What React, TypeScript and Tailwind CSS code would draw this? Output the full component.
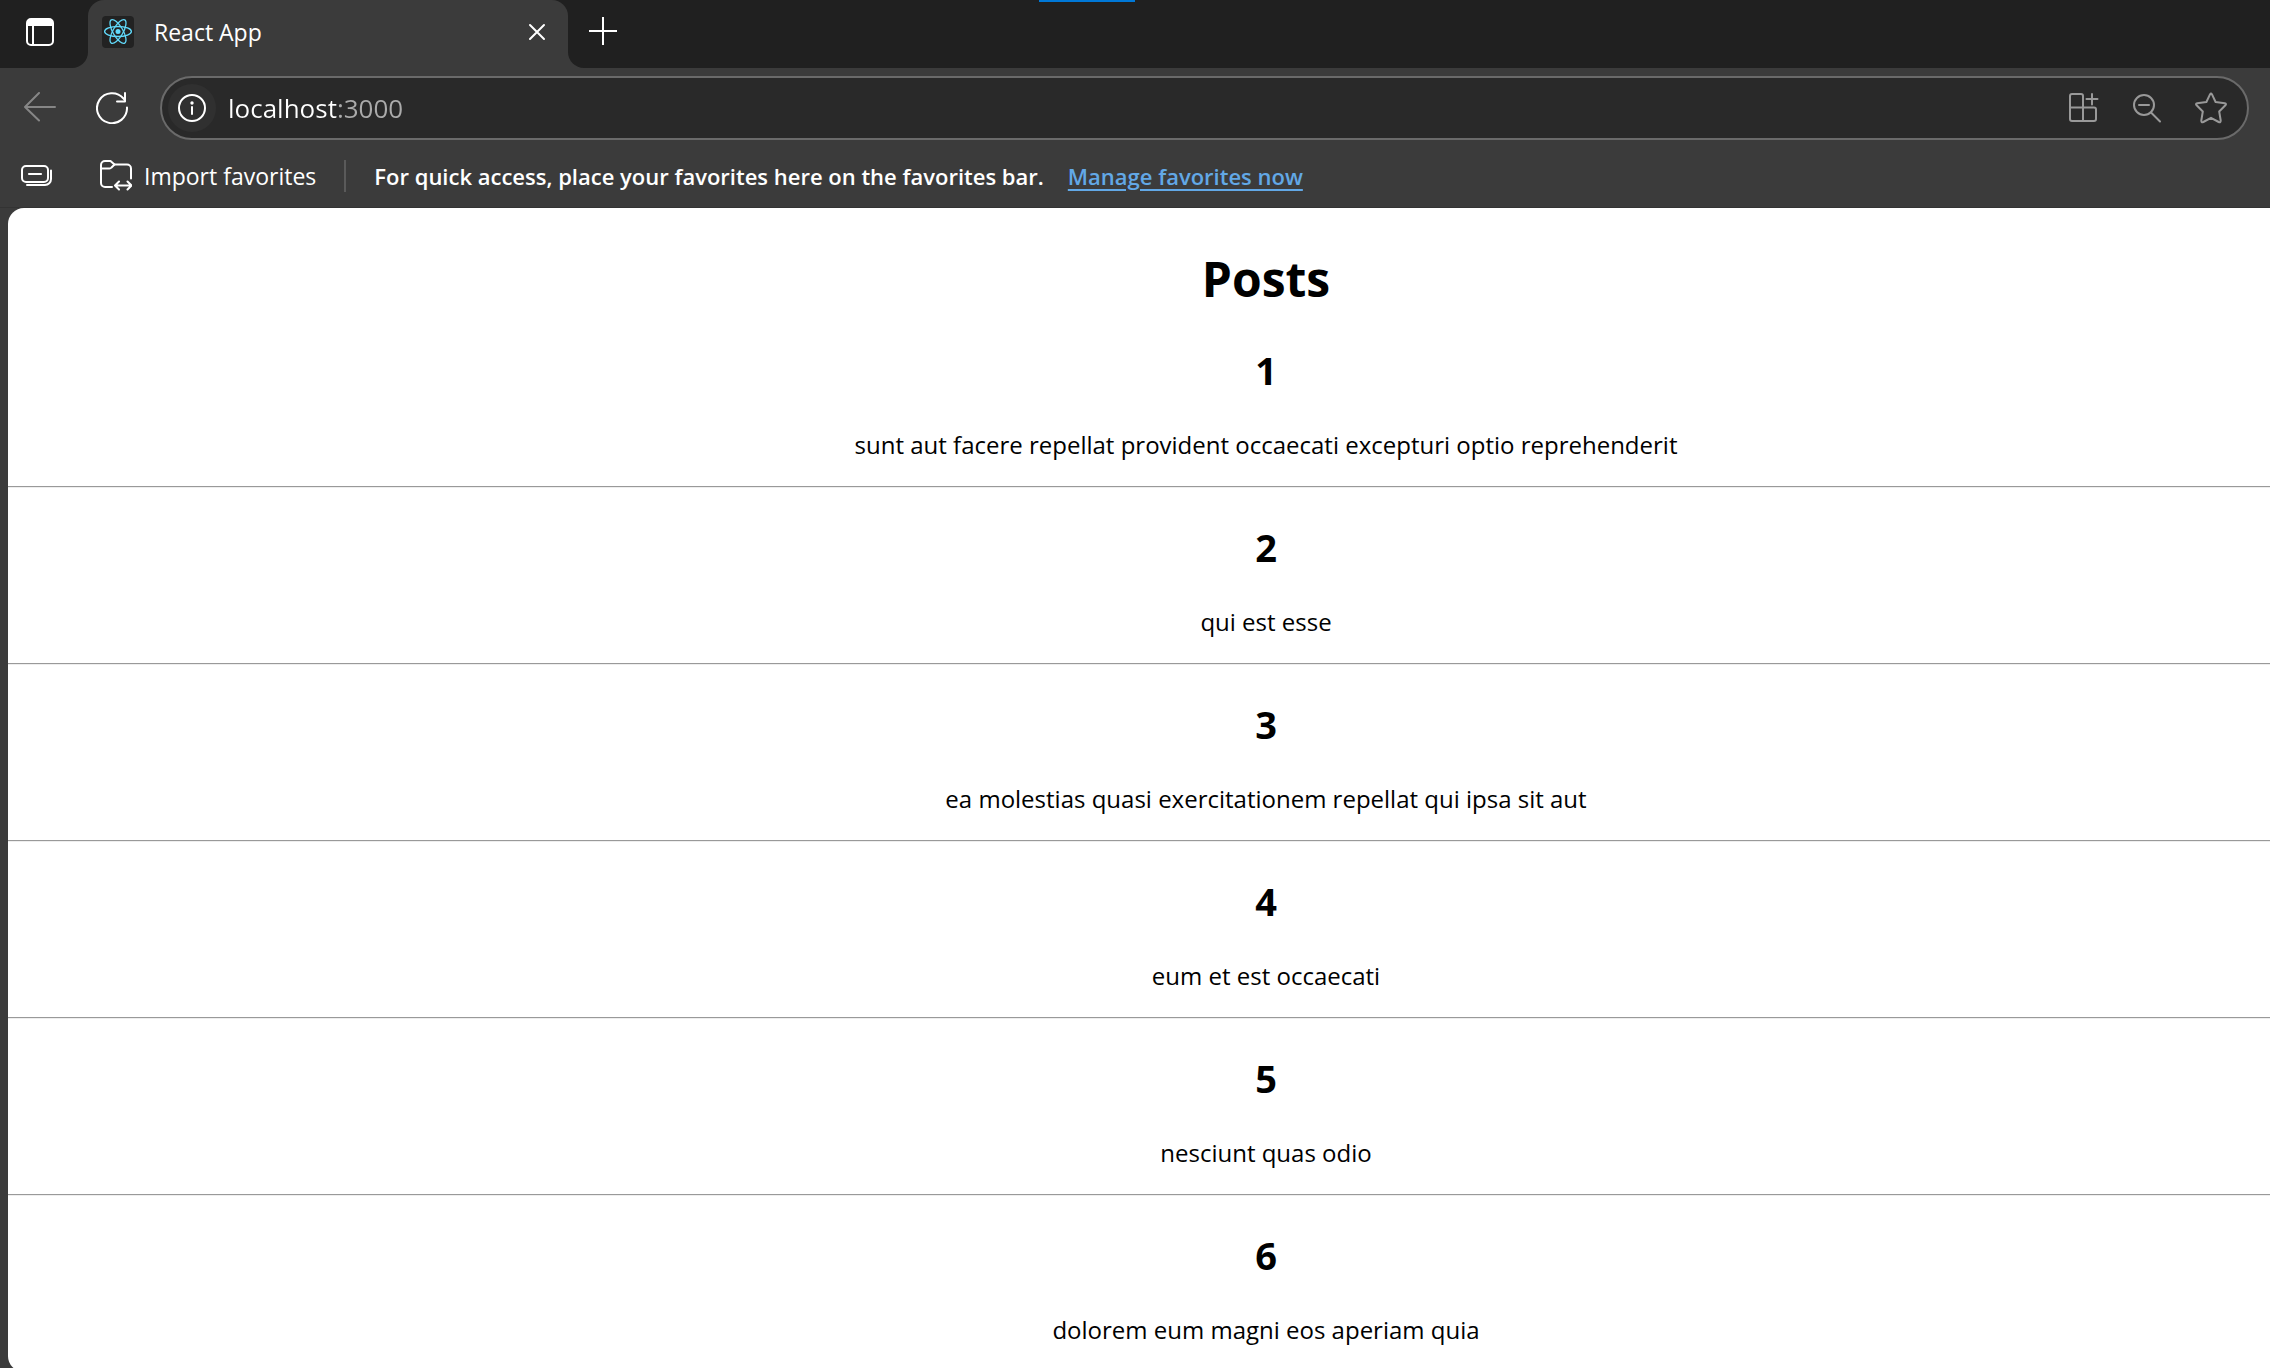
import React from "react";

const posts = [
  { id: 1, title: "sunt aut facere repellat provident occaecati excepturi optio reprehenderit" },
  { id: 2, title: "qui est esse" },
  { id: 3, title: "ea molestias quasi exercitationem repellat qui ipsa sit aut" },
  { id: 4, title: "eum et est occaecati" },
  { id: 5, title: "nesciunt quas odio" },
  { id: 6, title: "dolorem eum magni eos aperiam quia" },
];

function TabActionsIcon() {
  return (
    <svg width="28" height="28" viewBox="0 0 28 28" fill="none" stroke="white" strokeWidth="2">
      <rect x="1" y="1" width="26" height="26" rx="4" />
      <path d="M1 8V5a4 4 0 0 1 4-4h18a4 4 0 0 1 4 4v3z" fill="white" stroke="none" />
      <path d="M7 7v20" />
    </svg>
  );
}

function ReactIcon() {
  return (
    <svg width="32" height="32" viewBox="0 0 32 32" fill="none" stroke="#61dafb" strokeWidth="1.3">
      <rect width="32" height="32" rx="4" fill="#222222" stroke="none" />
      <ellipse cx="16" cy="15.5" rx="13.4" ry="5" />
      <ellipse cx="16" cy="15.5" rx="13.4" ry="5" transform="rotate(60 16 15.5)" />
      <ellipse cx="16" cy="15.5" rx="13.4" ry="5" transform="rotate(120 16 15.5)" />
      <circle cx="16" cy="15.5" r="2.5" fill="#61dafb" stroke="none" />
    </svg>
  );
}

function CloseIcon() {
  return (
    <svg width="18" height="18" viewBox="0 0 18 18" stroke="white" strokeWidth="2" strokeLinecap="round">
      <path d="M2 2l14 14M16 2L2 16" />
    </svg>
  );
}

function PlusIcon() {
  return (
    <svg width="28" height="28" viewBox="0 0 28 28" stroke="white" strokeWidth="2">
      <path d="M14 0v28M0 14h28" />
    </svg>
  );
}

function BackIcon() {
  return (
    <svg width="32" height="32" viewBox="0 0 32 32" fill="none" stroke="#868686" strokeWidth="2" strokeLinecap="round" strokeLinejoin="round">
      <path d="M15 1L1 15l14 13.500M1 15h30" />
    </svg>
  );
}

function RefreshIcon() {
  return (
    <svg width="32" height="32" viewBox="0 0 32 32" fill="none" stroke="white" strokeWidth="2" strokeLinecap="round" strokeLinejoin="round">
      <path d="M31 15.500A15 15 0 1 1 27.500 6.500L29 8.500" />
      <path d="M29 1v8.500h-8" />
    </svg>
  );
}

function InfoIcon() {
  return (
    <svg width="28" height="28" viewBox="0 0 28 28" fill="none" stroke="white" strokeWidth="2">
      <circle cx="14" cy="14" r="13" />
      <path d="M14 13v7" strokeLinecap="round" />
      <circle cx="14" cy="9" r="1.700" fill="white" stroke="none" />
    </svg>
  );
}

function AppsIcon() {
  return (
    <svg width="30" height="30" viewBox="0 0 30 30" fill="none" stroke="#999999" strokeWidth="2" strokeLinejoin="round">
      <path d="M14 28V3a2 2 0 0 0-2-2H3a2 2 0 0 0-2 2v23a2 2 0 0 0 2 2h22a2 2 0 0 0 2-2V16.500a2 2 0 0 0-2-2H1" />
      <path d="M23 1v10.500M17.500 6h11" strokeLinecap="round" />
    </svg>
  );
}

function ZoomOutIcon() {
  return (
    <svg width="30" height="30" viewBox="0 0 30 30" fill="none" stroke="#999999" strokeWidth="2" strokeLinecap="round">
      <circle cx="12" cy="12" r="10" />
      <path d="M7 12h10M19 19.500l9 9" />
    </svg>
  );
}

function StarIcon() {
  return (
    <svg width="32" height="32" viewBox="0 0 32 32" fill="none" stroke="#999999" strokeWidth="2" strokeLinejoin="round">
      <path d="M15 2.400Q16 .6 17 2.400L20.600 10L29.800 11.200Q31.800 11.700 30.400 13.300L24.200 19.500L25.700 28.500Q25.700 31 23.700 30L16 25.800L8.300 30Q6.300 31 6.300 28.500L7.800 19.500L1.600 13.300Q.2 11.700 2.200 11.200L11.400 10Z" />
    </svg>
  );
}

function WorkspaceIcon() {
  return (
    <svg width="32" height="22" viewBox="0 0 32 22" fill="none" stroke="white" strokeWidth="2" strokeLinecap="round">
      <rect x="2" y="1" width="26" height="16" rx="4" />
      <path d="M9 9h12" strokeWidth="2.200" />
      <path d="M31 5.500V14a6 6 0 0 1-6 6H7" />
    </svg>
  );
}

function ImportIcon() {
  return (
    <svg width="32" height="32" viewBox="0 0 32 32" fill="none" stroke="white" strokeWidth="2" strokeLinecap="round" strokeLinejoin="round">
      <path d="M12 27H5a4 4 0 0 1-4-4V5a4 4 0 0 1 4-4h5.500l4 3.500H27a4 4 0 0 1 4 4V18.500" />
      <path d="M1 8.500h8.500q1.200 0 2-1l3-3" />
      <path d="M15.500 25.500h15.500M19 21.500l-4 4 4 4M27.500 21.500l4 4-4 4" />
    </svg>
  );
}

export default function App() {
  return (
    <div className="relative flex h-screen flex-col overflow-hidden bg-[#3b3b3b] font-['Open_Sans',sans-serif] text-white">
      <div className="absolute top-0 left-[1039px] h-0.5 w-24 bg-[#0078d7]" />

      <header className="shrink-0">
        <div className="flex h-[68px]">
          <div className="flex w-[88px] items-center rounded-br-2xl bg-[#202020] pb-1 pl-[26px]">
            <button type="button" aria-label="Tab actions">
              <TabActionsIcon />
            </button>
          </div>
          <div className="w-[480px] bg-[#202020]">
            <div className="flex h-full items-center rounded-t-2xl bg-[#3b3b3b] pr-[22px] pb-1 pl-3.5">
              <ReactIcon />
              <span className="ml-5 flex-1 text-[23px] leading-8">React App</span>
              <button type="button" aria-label="Close tab">
                <CloseIcon />
              </button>
            </div>
          </div>
          <div className="flex flex-1 items-center rounded-bl-2xl bg-[#202020] pb-1.5 pl-[21px]">
            <button type="button" aria-label="New tab">
              <PlusIcon />
            </button>
          </div>
        </div>

        <div className="flex items-center pt-2 pr-[21px] pl-6">
          <button type="button" aria-label="Back" disabled>
            <BackIcon />
          </button>
          <button type="button" aria-label="Refresh" className="ml-10">
            <RefreshIcon />
          </button>
          <div className="ml-8 flex h-16 flex-1 items-center rounded-full border-2 border-[#6a6a6a] bg-[#292929] pr-5 pl-1.5">
            <button
              type="button"
              aria-label="View site information"
              className="flex size-12 items-center justify-center rounded-full bg-[#303030]"
            >
              <InfoIcon />
            </button>
            <input
              type="text"
              aria-label="Address"
              defaultValue="localhost:3000"
              className="ml-3 h-9 min-w-0 flex-1 bg-[linear-gradient(to_right,#ffffff_110px,#ababab_110px)] bg-clip-text text-[26px] text-transparent outline-none"
            />
            <div className="flex items-center gap-[33px]">
              <button type="button" aria-label="App available">
                <AppsIcon />
              </button>
              <button type="button" aria-label="Zoom out">
                <ZoomOutIcon />
              </button>
              <button type="button" aria-label="Add to favorites">
                <StarIcon />
              </button>
            </div>
          </div>
        </div>

        <div className="flex h-[68px] items-center border-b border-[#333333] pt-1 pl-5 text-[22px] leading-8">
          <button type="button" aria-label="Workspaces">
            <WorkspaceIcon />
          </button>
          <button type="button" className="ml-12 flex items-center gap-3 text-[23px]">
            <ImportIcon />
            Import favorites
          </button>
          <div className="ml-7 h-8 w-0.5 bg-[#5a5a5a]" />
          <p className="ml-7 font-semibold">For quick access, place your favorites here on the favorites bar.</p>
          <a href="#favorites" className="ml-6 font-semibold text-[#62a8e6] underline underline-offset-4">
            Manage favorites now
          </a>
        </div>
      </header>

      <main className="ml-2 shrink-0 rounded-l-2xl bg-white pt-10 text-center text-black">
        <h1 className="pl-[254px] text-[48px] leading-[62px] font-bold">Posts</h1>
        {posts.map((post) => (
          <article
            key={post.id}
            className="border-b border-[#999999] pt-[34px] pb-6 pl-[254px] shadow-[0_1px_0_#eeeeee] last:border-white last:shadow-none"
          >
            <h2 className="text-[38px] leading-[52px] font-bold">{post.id}</h2>
            <p className="mt-8 text-[24px] leading-[34px]">{post.title}</p>
          </article>
        ))}
      </main>
    </div>
  );
}
